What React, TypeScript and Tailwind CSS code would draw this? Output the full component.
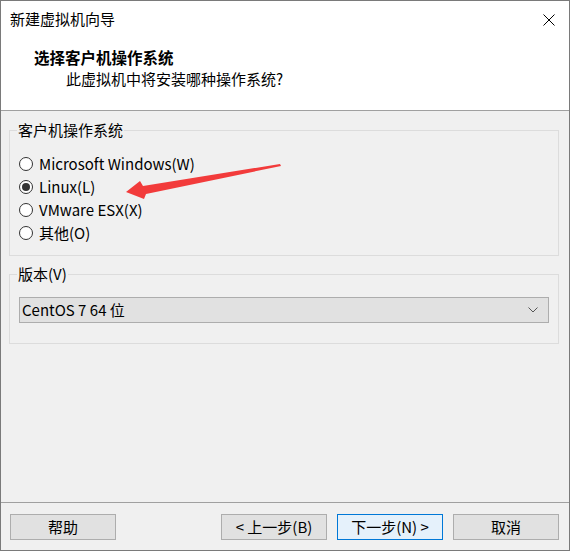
import { useState } from "react";

const OS_ITEMS = [
  { id: "windows", label: "Microsoft Windows(W)" },
  { id: "linux", label: "Linux(L)" },
  { id: "esx", label: "VMware ESX(X)" },
  { id: "other", label: "其他(O)" },
];

const FONT = "font-['Noto_Sans_CJK_SC',sans-serif]";

function Radio({ checked }: { checked: boolean }) {
  return (
    <span className="flex h-[14px] w-[14px] items-center justify-center rounded-full border border-[#333333] bg-white">
      {checked && <span className="h-[8px] w-[8px] rounded-full bg-[#333333]" />}
    </span>
  );
}

export default function App() {
  const [os, setOs] = useState("linux");

  return (
    <div className={`h-[551px] w-[570px] border border-[#7a7a7a] bg-[#f0f0f0] text-[15px] text-black ${FONT}`}>
      {/* 标题栏 */}
      <div className="flex h-[36px] items-center justify-between bg-white pl-[9px] pr-[14px]">
        <span className="leading-[20px]">新建虚拟机向导</span>
        <svg width="12" height="12" viewBox="0 0 12 12" className="mt-[1px]">
          <path d="M0.5 0.5 L11.5 11.5 M11.5 0.5 L0.5 11.5" stroke="#000" strokeWidth="1" />
        </svg>
      </div>

      {/* 头部 */}
      <div className="h-[74px] border-b border-[#a0a0a0] bg-white pt-[10px]">
        <div className="pl-[33px] text-[15.5px] font-bold leading-[20px]">选择客户机操作系统</div>
        <div className="mt-[2px] pl-[65px] leading-[20px]">此虚拟机中将安装哪种操作系统?</div>
      </div>

      {/* 内容 */}
      <div className="relative h-[392px] border-b border-[#a0a0a0] pl-[8px] pr-[10px] pt-[9px]">
        <fieldset className="border border-[#dcdcdc] pb-[11px] pt-[12px]">
          <legend className="ml-[7px] px-[1px] leading-[20px]">客户机操作系统</legend>
          {OS_ITEMS.map((item) => (
            <label
              key={item.id}
              className="flex h-[23px] cursor-pointer items-center gap-[6px] pl-[9px]"
              onClick={() => setOs(item.id)}
            >
              <Radio checked={os === item.id} />
              <span className="leading-[20px]">{item.label}</span>
            </label>
          ))}
        </fieldset>

        <fieldset className="mt-[8px] border border-[#dcdcdc] px-[9px] pb-[20px] pt-[13px]">
          <legend className="-ml-[2px] px-[1px] leading-[20px]">版本(V)</legend>
          <div className="flex h-[26px] items-center justify-between border border-[#adadad] bg-[#e1e1e1] pl-[2px] pr-[10px]">
            <span className="leading-[20px]">CentOS 7 64 位</span>
            <svg width="10" height="6" viewBox="0 0 10 6">
              <path d="M0.5 0.5 L5 5 L9.5 0.5" stroke="#555" strokeWidth="1" fill="none" />
            </svg>
          </div>
        </fieldset>

        {/* 红色箭头标注 */}
        <svg className="pointer-events-none absolute left-[-1px] top-[-111px]" width="570" height="551">
          <polygon
            points="126,192 140,181 143,186 280,164 281,166 146,194 144,199"
            fill="#f23b3b"
          />
        </svg>
      </div>

      {/* 按钮 */}
      <div className="flex h-[47px] items-start pl-[9px] pr-[10px] pt-[11px]">
        <button className="h-[26px] w-[106px] border border-[#adadad] bg-[#e1e1e1] leading-[20px]">帮助</button>
        <div className="flex-1" />
        <div className="flex gap-[10px]">
          <button className="h-[26px] w-[106px] border border-[#adadad] bg-[#e1e1e1] leading-[20px]">&lt; 上一步(B)</button>
          <button className="h-[26px] w-[106px] border border-[#0078d7] bg-[#e5f1fb] leading-[20px]">下一步(N) &gt;</button>
          <button className="h-[26px] w-[106px] border border-[#adadad] bg-[#e1e1e1] leading-[20px]">取消</button>
        </div>
      </div>
    </div>
  );
}
